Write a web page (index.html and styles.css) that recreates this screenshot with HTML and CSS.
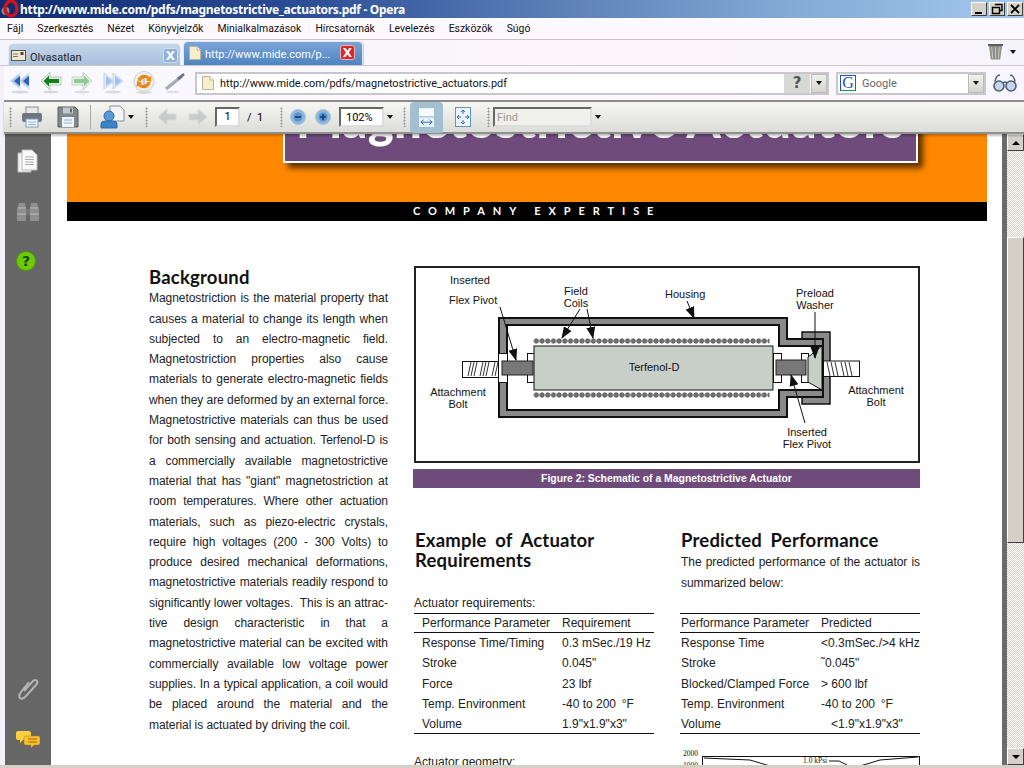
FILE: index.html
```html
<!DOCTYPE html>
<html lang="hu">
<head>
<meta charset="utf-8">
<title>Opera</title>
<link rel="stylesheet" href="styles.css">
</head>
<body>
<div class="window">
  <header class="titlebar">
    <svg class="ic-opera" width="18" height="18" viewBox="0 0 18 18"><circle cx="4.500" cy="11" r="4" fill="#8a8a98"/><ellipse cx="10" cy="8.500" rx="6" ry="7.500" fill="none" stroke="#c8161c" stroke-width="3.400"/></svg>
    <span class="title-text">http://www.mide.com/pdfs/magnetostrictive_actuators.pdf - Opera</span>
    <div class="winbtns">
      <span class="winbtn"><svg width="16" height="14" viewBox="0 0 16 14"><rect x="4" y="10" width="7" height="2" fill="#000"/></svg></span>
      <span class="winbtn"><svg width="16" height="14" viewBox="0 0 16 14"><path d="M6 2.500h7v6h-2M3.500 5.500h7v6h-7z" fill="none" stroke="#000" stroke-width="1.400"/></svg></span>
      <span class="winbtn"><svg width="16" height="14" viewBox="0 0 16 14"><path d="M4 3l8 8M12 3l-8 8" stroke="#000" stroke-width="1.800"/></svg></span>
    </div>
  </header>
  <nav class="menubar">
    <span>Fájl</span><span>Szerkesztés</span><span>Nézet</span><span>Könyvjelzők</span><span>Minialkalmazások</span><span>Hírcsatornák</span><span>Levelezés</span><span>Eszközök</span><span>Súgó</span>
  </nav>
  <div class="tabbar">
    <div class="tab tab-off">
      <svg width="15" height="11" viewBox="0 0 15 11"><rect x=".5" y=".5" width="14" height="10" fill="#f0e8c8" stroke="#555"/><rect x="9.500" y="2" width="3" height="3" fill="#444"/><path d="M2 4h5M2 6.500h5" stroke="#777"/></svg>
      <span class="tab-label">Olvasatlan</span>
      <span class="tab-x tab-x-off">X</span>
    </div>
    <div class="tab tab-on">
      <svg width="12" height="14" viewBox="0 0 12 14"><path d="M.5.5h7.500l3.500 3.500v9.500h-11z" fill="#f7eecd" stroke="#b9b39a"/><path d="M8 .5v3.500h3.500" fill="#fff" stroke="#b9b39a"/></svg>
      <span class="tab-label">http://www.mide.com/p...</span>
      <span class="tab-x tab-x-on">X</span>
    </div>
    <svg class="ic-trash" width="15" height="18" viewBox="0 0 16 18"><path d="M1 2h14l-2 15h-10z" fill="#8f8f8a"/><path d="M0 1.500h16" stroke="#555" stroke-width="2"/><path d="M4 4l1 12M8 4v12M12 4l-1 12" stroke="#c9c9c4"/></svg>
    <span class="caret caret-trash"></span>
  </div>
  <div class="addressbar">
    <svg class="tb-ic" width="22" height="24" viewBox="0 0 22 24"><ellipse cx="11" cy="21" rx="9" ry="1.500" fill="#d8d8dc"/><path d="M11 2v16L1 10zM20 2v16L10 10z" fill="#a9c8ee" stroke="#dfe6f0" stroke-width="1.200"/><path d="M11 5v10l-6-5zM20 5v10l-6-5z" fill="#2a62b4"/></svg>
    <svg class="tb-ic" width="22" height="24" viewBox="0 0 22 24"><ellipse cx="11" cy="21" rx="8" ry="1.500" fill="#d8d8dc"/><path d="M10 1v5h11v8H10v5L1 10z" fill="#e6ece6" stroke="#b9c6b9"/><path d="M9 4.500v3.500h10v4H9v3.500L3.500 10z" fill="#13801a"/></svg>
    <svg class="tb-ic" width="22" height="24" viewBox="0 0 22 24"><ellipse cx="11" cy="21" rx="8" ry="1.500" fill="#dcdce0"/><path d="M12 1v5H1v8h11v5l9-9z" fill="#eaf0ea" stroke="#c6d2c6"/><path d="M13 4.500v3.500H3v4h10v3.500l5.500-5.500z" fill="#93c993"/></svg>
    <svg class="tb-ic" width="22" height="24" viewBox="0 0 22 24"><ellipse cx="11" cy="21" rx="8" ry="1.500" fill="#dcdce0"/><path d="M2 2v16l10-8zM11 2v16l10-8z" fill="#e2ecf8" stroke="#c4d2e4"/><path d="M4 5v10l6.500-5zM13 5v10l6.500-5z" fill="#9fc2ee"/></svg>
    <svg class="tb-ic" width="22" height="24" viewBox="0 0 22 24"><ellipse cx="11" cy="21.500" rx="8" ry="1.500" fill="#d8d8dc"/><circle cx="11" cy="10.500" r="10" fill="#efeff0" stroke="#cfcfd2"/><path d="M4.500 9.500a7 7 0 0 1 12-3.500l2-1-.5 6-5.500-2 2-1a4.500 4.500 0 0 0-7 2.500z" fill="#f08a10"/><path d="M17.500 11.500a7 7 0 0 1-12 3.500l-2 1 .5-6 5.500 2-2 1a4.500 4.500 0 0 0 7-2.500z" fill="#f08a10"/><path d="M11 4v13" stroke="#888" stroke-width=".8"/></svg>
    <svg class="tb-ic" width="22" height="24" viewBox="0 0 22 24"><ellipse cx="9" cy="21" rx="7" ry="1.300" fill="#e0e0e4"/><path d="M2 18L18 5" stroke="#a4acb6" stroke-width="3.500"/><path d="M14 8l6-5" stroke="#66707e" stroke-width="2.500"/></svg>
    <div class="urlbox">
      <svg width="12" height="14" viewBox="0 0 12 14"><path d="M.5.5h7.500l3.500 3.500v9.500h-11z" fill="#f7eecd" stroke="#b9b39a"/><path d="M8 .5v3.500h3.500" fill="#fff" stroke="#b9b39a"/></svg>
      <span class="urltext">http://www.mide.com/pdfs/magnetostrictive_actuators.pdf</span>
      <span class="qbtn">?</span>
      <span class="ddbtn"><span class="caret"></span></span>
    </div>
    <div class="searchbox">
      <span class="gicon">G</span>
      <span class="gtext">Google</span>
      <span class="ddbtn"><span class="caret"></span></span>
    </div>
    <svg class="ic-glasses" width="24" height="20" viewBox="0 0 24 20"><circle cx="6" cy="13" r="5" fill="#c6d4f0" stroke="#4c5f70" stroke-width="1.600"/><circle cx="18" cy="13" r="5" fill="#c6d4f0" stroke="#4c5f70" stroke-width="1.600"/><path d="M10 10q2-2 4 0M2 9q1-7 5-7M22 9q-1-7-5-7" fill="none" stroke="#4c5f70" stroke-width="1.300"/></svg>
  </div>
  <div class="pdfbar">
    <span class="grip"></span>
    <svg class="pb-print" width="22" height="22" viewBox="0 0 22 22"><rect x="5" y="1" width="12" height="8" fill="#e8e8e8" stroke="#8a9096"/><rect x="1" y="7" width="20" height="9" rx="2" fill="#6f7880"/><rect x="5" y="13" width="12" height="8" fill="#f2f6fa" stroke="#7fa0bc"/><path d="M7 16h8M7 18.500h8" stroke="#9ab4cc"/></svg>
    <svg class="pb-save" width="22" height="22" viewBox="0 0 22 22"><path d="M1 1h17l3 3v17H1z" fill="#82878c" stroke="#5f5f5f"/><rect x="6" y="1.500" width="10" height="6" fill="#c4c8cc"/><rect x="13" y="2.500" width="2" height="4" fill="#666"/><rect x="5" y="11" width="12" height="10" fill="#eef3f8"/><path d="M7 14h8M7 17h8" stroke="#9ab4cc"/></svg>
    <span class="sep"></span>
    <svg class="pb-user" width="25" height="24" viewBox="0 0 25 24"><path d="M10 1h10l4 4v11H10z" fill="#f4f4f4" stroke="#8a9096"/><circle cx="9" cy="11" r="5" fill="#5a9ad6" stroke="#2a6aa6"/><path d="M1 23v-4q0-3 4-3h8q4 0 4 3v4z" fill="#3a82c8" stroke="#2a6aa6"/></svg>
    <span class="caret caret-user"></span>
    <span class="grip grip-nav"></span>
    <svg class="pb-arrow" width="20" height="18" viewBox="0 0 20 18"><path d="M10 1v5h9v6h-9v5L1 9z" fill="#c9cbc8" stroke="#dadbd8"/></svg>
    <svg class="pb-arrow2" width="20" height="18" viewBox="0 0 20 18"><path d="M10 1v5H1v6h9v5l9-8z" fill="#c9cbc8" stroke="#dadbd8"/></svg>
    <span class="pagebox">1</span>
    <span class="pagecount">/ &nbsp;1</span>
    <span class="grip grip-zoom"></span>
    <svg class="pb-zoom" width="16" height="16" viewBox="0 0 16 16"><circle cx="8" cy="8" r="7.500" fill="#8fb8de" stroke="#a9c4dc"/><circle cx="8" cy="8" r="4.500" fill="#5f93cb"/><path d="M5 8h6" stroke="#1d4d86" stroke-width="2"/></svg>
    <svg class="pb-zoom2" width="16" height="16" viewBox="0 0 16 16"><circle cx="8" cy="8" r="7.500" fill="#8fb8de" stroke="#a9c4dc"/><circle cx="8" cy="8" r="4.500" fill="#5f93cb"/><path d="M5 8h6M8 5v6" stroke="#1d4d86" stroke-width="2"/></svg>
    <span class="zoombox">102%</span>
    <span class="caret caret-zoom"></span>
    <span class="grip grip-fit"></span>
    <span class="fitbtn"><svg width="15" height="19" viewBox="0 0 16 20"><rect x="0" y="0" width="16" height="20" fill="#f6fafd"/><rect x="0" y="9" width="16" height="1" fill="#5f93c4"/><rect x="0" y="10" width="16" height="10" fill="#e9f1f8"/><path d="M2 15h12M2 15l3-2.500M2 15l3 2.500M14 15l-3-2.500M14 15l-3 2.500" stroke="#2a6fb0" fill="none"/></svg></span>
    <svg class="pb-fitpage" width="16" height="20" viewBox="0 0 16 20"><rect x=".5" y=".5" width="15" height="19" fill="#eef5fb" stroke="#5f93c4"/><path d="M8 3v4M6 5l2-2 2 2M8 17v-4M6 15l2 2 2-2M2 10h4M4 8l-2 2 2 2M14 10h-4M12 8l2 2-2 2" fill="none" stroke="#2a6fb0"/></svg>
    <span class="grip grip-find"></span>
    <span class="findbox">Find</span>
    <span class="caret caret-find"></span>
  </div>
  <main class="workspace">
    <aside class="sidebar">
      <svg width="22" height="24" viewBox="0 0 22 24"><path d="M1 4h13v19H1z" fill="#f4f4f4" stroke="#bbb"/><path d="M5 1h10l5 5v15H5z" fill="#fafafa" stroke="#bbb"/><path d="M8 8h9M8 10.500h9M8 13h9M8 15.500h9" stroke="#aaa"/></svg>
      <svg class="sb-bino" width="24" height="20" viewBox="0 0 24 20"><path d="M1 7l2-6h6l1 6v12H1zM14 7l1-6h6l2 6v12h-9z" fill="#8f8f8f"/><path d="M2 6h8M14 6h8M1 12h9M14 12h9" stroke="#bcbcbc"/><rect x="10" y="7" width="4" height="6" fill="#777"/></svg>
      <svg class="sb-help" width="20" height="20" viewBox="0 0 20 20"><circle cx="10" cy="10" r="9.500" fill="#6fc808" stroke="#4d9a05"/><text x="10" y="15" text-anchor="middle" class="sb-help-q">?</text></svg>
      <span class="sb-spacer"></span>
      <svg class="sb-clip" width="22" height="24" viewBox="0 0 22 24"><path d="M7 14L16 4q3-2 4 0t-1 4L9 19q-4 4-6 2t1-6l8-10" fill="none" stroke="#b4b4b4" stroke-width="2"/></svg>
      <svg class="sb-comm" width="24" height="19" viewBox="0 0 24 19"><path d="M2 1h11q2 0 2 2v5q0 2-2 2H7l-3 3v-3H2q-2 0-2-2V3q0-2 2-2z" fill="#f8d040"/><path d="M10 6h12q2 0 2 2v5q0 2-2 2h-4l-3 3v-3h-5q-2 0-2-2V8q0-2 2-2z" fill="#fbc02a" stroke="#b07a10" stroke-width=".5"/><path d="M12 9h9M12 12h9" stroke="#9a6a10"/></svg>
    </aside>
    <article class="page">
      <div class="banner">
        <div class="titlebox"><div class="doc-title">Magnetostrictive Actuators</div></div>
      </div>
      <div class="blackbar">COMPANY EXPERTISE</div>
      <div class="content">
        <section class="col-left">
          <h2>Background</h2>
          <div class="just">
            <span>Magnetostriction is the material property that</span>
            <span>causes a material to change its length when</span>
            <span>subjected to an electro-magnetic field.</span>
            <span>Magnetostriction properties also cause</span>
            <span>materials to generate electro-magnetic fields</span>
            <span>when they are deformed by an external force.</span>
            <span>Magnetostrictive materials can thus be used</span>
            <span>for both sensing and actuation. Terfenol-D is</span>
            <span>a commercially available magnetostrictive</span>
            <span>material that has "giant" magnetostriction at</span>
            <span>room temperatures. Where other actuation</span>
            <span>materials, such as piezo-electric crystals,</span>
            <span>require high voltages (200 - 300 Volts) to</span>
            <span>produce desired mechanical deformations,</span>
            <span>magnetostrictive materials readily respond to</span>
            <span>significantly lower voltages.&nbsp; This is an attrac-</span>
            <span>tive design characteristic in that a</span>
            <span>magnetostrictive material can be excited with</span>
            <span>commercially available low voltage power</span>
            <span>supplies. In a typical application, a coil would</span>
            <span>be placed around the material and the</span>
            <span class="last">material is actuated by driving the coil.</span>
          </div>
        </section>
        <section class="col-right">
          <svg class="diagram" width="506" height="197" viewBox="414 266 506 197">
            <defs>
              <pattern id="coil" x="533.500" y="338" width="5.700" height="6" patternUnits="userSpaceOnUse"><circle cx="2.850" cy="3" r="2.200" fill="#777" stroke="#333" stroke-width=".7"/></pattern>
              <marker id="ah" viewBox="0 0 12 10" refX="11" refY="5" markerUnits="userSpaceOnUse" markerWidth="12" markerHeight="10" orient="auto"><path d="M0 .5L12 5 0 9.500z" fill="#111"/></marker>
            </defs>
            <rect x="415" y="267" width="504" height="195" fill="#fff" stroke="#222" stroke-width="2"/>
            <rect x="802" y="332" width="28" height="72" fill="#8a8a8a" stroke="#111" stroke-width="1.500"/>
            <path d="M499 318H787V339H823V397H787V417H499z" fill="#8a8a8a" stroke="#111" stroke-width="2"/>
            <path d="M507 325H779V346H822V390H779V410H507z" fill="#fff" stroke="#111" stroke-width="2"/>
            <rect x="533.500" y="338" width="236" height="6" fill="url(#coil)"/>
            <rect x="533.500" y="392" width="236" height="6" fill="url(#coil)"/>
            <rect x="462.500" y="361.500" width="36" height="16" fill="#fff" stroke="#111"/>
            <path d="M468 376l3-14M471 376l3-14M474 376l3-14M480 376l3-14M483 376l3-14M486 376l3-14M492 376l3-14M495 376l3-14" stroke="#333"/>
            <rect x="498.500" y="353.500" width="9" height="29" fill="#fff" stroke="#111"/>
            <rect x="527.500" y="353.500" width="7" height="29" fill="#fff" stroke="#111"/>
            <rect x="502" y="361" width="31" height="14" fill="#777" stroke="#222"/>
            <rect x="534" y="346" width="239" height="44" fill="#c8cfc8" stroke="#111"/>
            <rect x="773.500" y="353.500" width="8" height="29" fill="#fff" stroke="#111"/>
            <rect x="801.500" y="353.500" width="7" height="29" fill="#fff" stroke="#111"/>
            <rect x="776" y="360" width="30" height="15" fill="#777" stroke="#222"/>
            <path d="M808 357L822 346V390L808 382z" fill="#c8cfc8" stroke="#111"/>
            <rect x="823.500" y="361" width="36" height="15.500" fill="#fff" stroke="#111"/>
            <path d="M827 362l3 14M831 362l3 14M835 362l3 14M841 362l3 14M845 362l3 14M849 362l3 14" stroke="#333"/>
            <g stroke="#111" marker-end="url(#ah)">
              <path d="M500 307L516 360"/>
              <path d="M580 309L562 338"/>
              <path d="M587 309L593 338"/>
              <path d="M687 301L694 318"/>
              <path d="M815 312V358"/>
              <path d="M805 423L791 375"/>
            </g>
            <g class="dg-text">
              <text x="450" y="284">Inserted</text>
              <text x="449" y="304">Flex Pivot</text>
              <text x="576" y="295" class="mid">Field</text>
              <text x="576" y="307" class="mid">Coils</text>
              <text x="665" y="298">Housing</text>
              <text x="815" y="297" class="mid">Preload</text>
              <text x="815" y="309" class="mid">Washer</text>
              <text x="654" y="371" class="mid">Terfenol-D</text>
              <text x="458" y="396" class="mid">Attachment</text>
              <text x="458" y="408" class="mid">Bolt</text>
              <text x="876" y="394" class="mid">Attachment</text>
              <text x="876" y="406" class="mid">Bolt</text>
              <text x="807" y="436" class="mid">Inserted</text>
              <text x="807" y="448" class="mid">Flex Pivot</text>
            </g>
          </svg>
          <div class="caption">Figure 2: Schematic of a Magnetostrictive Actuator</div>
          <div class="two-col">
            <div>
              <h2>Example of Actuator<br>Requirements</h2>
              <div class="lead">Actuator requirements:</div>
              <table class="spec spec-l">
                <thead><tr><th>Performance Parameter</th><th>Requirement</th></tr></thead>
                <tbody>
                  <tr><td>Response Time/Timing</td><td>0.3 mSec./19 Hz</td></tr>
                  <tr><td>Stroke</td><td>0.045"</td></tr>
                  <tr><td>Force</td><td>23 lbf</td></tr>
                  <tr><td>Temp. Environment</td><td>-40 to 200 &thinsp;°F</td></tr>
                  <tr><td>Volume</td><td>1.9"x1.9"x3"</td></tr>
                </tbody>
              </table>
              <div class="lead lead-geo">Actuator geometry:</div>
            </div>
            <div>
              <h2>Predicted Performance</h2>
              <div class="just intro">
                <span>The predicted performance of the actuator is</span>
                <span class="last">summarized below:</span>
              </div>
              <table class="spec spec-r">
                <thead><tr><th>Performance Parameter</th><th>Predicted</th></tr></thead>
                <tbody>
                  <tr><td>Response Time</td><td>&lt;0.3mSec./&gt;4 kHz</td></tr>
                  <tr><td>Stroke</td><td>˜0.045"</td></tr>
                  <tr><td>Blocked/Clamped Force</td><td>&gt; 600 lbf</td></tr>
                  <tr><td>Temp. Environment</td><td>-40 to 200 &thinsp;°F</td></tr>
                  <tr><td>Volume</td><td>&nbsp; &nbsp;&lt;1.9"x1.9"x3"</td></tr>
                </tbody>
              </table>
              <svg class="chart" width="240" height="20" viewBox="680 750 240 20">
                <text x="683" y="756" class="chart-t">2000</text>
                <text x="683" y="768" class="chart-t">1000</text>
                <rect x="702.500" y="756.500" width="217" height="20" fill="#fff" stroke="#111"/>
                <path d="M704 758L750 760 770 766M860 766L880 760 918 757" fill="none" stroke="#111"/>
                <text x="803" y="763" class="chart-t">1.0 kPsi</text>
                <path d="M829 761h10l8 4" fill="none" stroke="#111"/>
              </svg>
            </div>
          </div>
        </section>
      </div>
    </article>
    <div class="rail"></div>
    <div class="scrollbar">
      <span class="sb-btn"><span class="sb-up"></span></span>
      <span class="sb-track-a"></span>
      <span class="sb-thumb"></span>
      <span class="sb-track-b"></span>
      <span class="sb-btn"><span class="sb-down"></span></span>
    </div>
  </main>
  <div class="statusstrip"></div>
</div>
</body>
</html>
```
FILE: styles.css
```css
* { box-sizing: border-box; }
html, body { margin: 0; padding: 0; }
body { width: 1024px; height: 768px; overflow: hidden; background: #f4f0fa; font-family: "Liberation Sans", Arial, sans-serif; }
.window { width: 1024px; height: 768px; display: flex; flex-direction: column; }

.titlebar { height: 18px; display: flex; align-items: center; background: linear-gradient(90deg, #0f2a70 0%, #2c4e96 30%, #5e80b8 55%, #80a6d2 75%, #a4c8f0 100%); }
.ic-opera { flex: none; margin-left: 1px; }
.title-text { margin-left: 1px; color: #fff; font: bold 12px "Noto Sans", sans-serif; white-space: nowrap; letter-spacing: -.29px; }
.winbtns { margin-left: auto; display: flex; gap: 2px; margin-right: 1px; }
.winbtn { width: 16px; height: 14px; background: #d4d0c8; border: 1px solid; border-color: #fff #404040 #404040 #fff; display: flex; align-items: center; justify-content: center; }
.winbtn svg { margin: -1px; flex: none; }

.menubar { height: 22px; display: flex; align-items: center; gap: 14px; padding-left: 7px; font: 10.450px Roboto, sans-serif; color: #111; background: linear-gradient(180deg, #fafaff, #fff7fb); border-bottom: 1px solid #c4c4cc; }

.tabbar { height: 26px; display: flex; align-items: flex-end; padding-left: 8px; background: linear-gradient(90deg, #f4f4fc, #fdf6fb 60%, #f6f4fb); border-bottom: 1px solid #c9c9d0; }
.tab { display: flex; align-items: center; border-radius: 5px 5px 0 0; }
.tab-off { width: 173px; height: 22px; padding: 2px 2px 0 2px; background: linear-gradient(180deg, #c5d6ea, #a8c0dc); border: 1px solid #e8eef6; border-bottom: 0; color: #222; }
.tab-on { width: 180px; height: 24px; margin-left: 2px; padding: 0 7px 2px 5px; background: linear-gradient(180deg, #7aa4d6, #4f84c2); border: 1px solid #dfe8f2; border-bottom: 0; color: #fff; box-shadow: 1px 0 0 #c8ccd4; }
.tab-label { margin: 3px 0 0 4px; font: 11px Roboto, sans-serif; white-space: nowrap; }
.tab-x { margin-left: auto; width: 15px; height: 15px; border-radius: 3px; display: flex; align-items: center; justify-content: center; color: #fff; font: bold 12px "DejaVu Sans", sans-serif; }
.tab-x-off { background: #8fb0d6; border: 1px solid #cfe0f0; }
.tab-x-on { background: #d42a2a; border: 1px solid #f0b0b0; }
.ic-trash { margin-left: auto; margin-right: 7px; margin-bottom: 4px; }
.caret { display: inline-block; width: 0; height: 0; border: 3px solid transparent; border-top: 4px solid #111; border-bottom: 0; flex: none; }
.caret-trash { margin-right: 8px; margin-bottom: 11px; }

.addressbar { height: 34px; margin-left: 4px; display: flex; align-items: center; padding-left: 5px; background: linear-gradient(90deg, #f8f8ff, #fff7fb 70%, #f8f6fc); }
.tb-ic { flex: none; margin-right: 9px; }
.urlbox { width: 634px; height: 23px; margin-left: 0; background: #fff; border: 2px solid #c8c8cc; display: flex; align-items: center; padding-left: 5px; flex: none; }
.urltext { margin: 1px 0 0 6px; font: 10.900px Roboto, sans-serif; color: #111; white-space: nowrap; }
.qbtn { margin-left: auto; width: 26px; height: 19px; display: flex; align-items: center; justify-content: center; background: #d8d8d4; color: #555; font: bold 15px "DejaVu Sans", sans-serif; }
.ddbtn { width: 16px; height: 19px; margin-left: 1px; display: flex; align-items: center; justify-content: center; background: linear-gradient(180deg, #f0f0ee, #d4d4d0); border: 1px solid #bbb; }
.searchbox { width: 150px; height: 23px; margin-left: 7px; background: #fff; border: 2px solid #c8c8cc; display: flex; align-items: center; padding-left: 2px; flex: none; }
.gicon { width: 16px; height: 16px; border: 1px solid; border-color: #1d4dc8 #d02020 #1a9a2a #1d4dc8; color: #1d4dc8; font: 16px/14px "Liberation Serif", serif; text-align: center; }
.gtext { margin: 1px 0 0 6px; font: 11px Roboto, sans-serif; color: #666; }
.searchbox .ddbtn { margin-left: auto; }
.ic-glasses { margin-left: 7px; flex: none; }

.pdfbar { height: 34px; margin-left: 4px; display: flex; align-items: center; background: linear-gradient(180deg, #f6f6f2, #dcdcd8); border-top: 2px solid #8c8c8c; border-bottom: 2px solid #8f8f8f; padding-left: 5px; position: relative; z-index: 2; box-shadow: 0 2px 2px rgba(0,0,0,.25); }
.grip { width: 3px; height: 20px; flex: none; background-image: radial-gradient(circle, #999 45%, transparent 50%); background-size: 3px 3px; }
.pb-print { margin-left: 9px; flex: none; }
.pb-save { margin-left: 14px; flex: none; }
.sep { width: 1px; height: 24px; margin-left: 11px; background: #aaa; flex: none; }
.pb-user { margin-left: 9px; flex: none; }
.caret-user { margin-left: 3px; }
.grip-nav { margin-left: 11px; }
.pb-arrow { margin-left: 9px; flex: none; }
.pb-arrow2 { margin-left: 11px; flex: none; }
.pagebox { width: 25px; height: 20px; margin-left: 7px; background: #fff; border: 2px solid; border-color: #666 #ddd #ddd #666; font: 11px/16px Roboto, sans-serif; text-align: center; flex: none; }
.pagecount { width: 33px; margin-left: 7px; font: 11px Roboto, sans-serif; white-space: nowrap; flex: none; }
.grip-zoom { margin-left: 0; }
.pb-zoom { margin-left: 7px; flex: none; }
.pb-zoom2 { margin-left: 9px; flex: none; }
.zoombox { width: 45px; height: 20px; margin-left: 8px; background: #fff; border: 2px solid; border-color: #666 #ddd #ddd #666; font: 11px/17px Roboto, sans-serif; padding-left: 5px; flex: none; }
.caret-zoom { margin-left: 3px; }
.grip-fit { margin-left: 10px; }
.fitbtn { width: 33px; height: 31px; margin-left: 4px; background: #a3c0d0; border-radius: 4px; display: flex; align-items: center; justify-content: center; flex: none; }
.pb-fitpage { margin-left: 12px; flex: none; }
.grip-find { margin-left: 16px; }
.findbox { width: 99px; height: 20px; margin-left: 3px; background: #f0f0ec; border: 2px solid; border-color: #666 #ddd #ddd #666; padding-left: 2px; font: 11px/17px Roboto, sans-serif; color: #999; flex: none; }
.caret-find { margin-left: 3px; }

.workspace { flex: 1; min-height: 0; margin-left: 5px; display: flex; overflow: hidden; background: #fff; }
.sidebar { width: 46px; flex: none; background: #666; display: flex; flex-direction: column; align-items: center; padding: 15px 0 16px; }
.sb-bino { margin-top: 29px; }
.sb-help { margin-top: 29px; margin-right: 4px; }
.sb-help-q { font: bold 14px "DejaVu Sans", sans-serif; fill: #0c4a08; }
.sb-spacer { flex: 1; }
.sb-comm { margin-top: 29px; margin-right: 1px; }

.page { width: 951px; flex: none; padding-left: 16px; background: #fff; }
.banner { width: 920px; height: 68px; background: #ff8800; display: flex; align-items: flex-end; overflow: hidden; padding: 0 0 39px 216px; }
.titlebox { width: 635px; height: 62px; flex: none; background: #6f4b7c; border: 2px solid #fff; border-top: 0; box-shadow: 5px 5px 6px rgba(0,0,0,.65); padding-left: 11px; }
.doc-title { margin-top: -4px; font: 900 49px/44px Lato, sans-serif; letter-spacing: .3px; color: #fff; white-space: nowrap; }
.blackbar { width: 920px; height: 19px; background: #000; color: #fff; font: bold 11px/18px Lato, sans-serif; letter-spacing: 7.900px; padding-left: 346px; white-space: nowrap; }
.content { display: grid; grid-template-columns: 239px 506px; column-gap: 26px; padding: 45px 0 0 82px; }
h2 { margin: 0; font: 700 18.500px/20.300px Lato, sans-serif; letter-spacing: .2px; word-spacing: 4px; color: #111; }
.col-left h2 { margin: 1px 0 1px; }
.just { font-size: 12px; line-height: 20.300px; letter-spacing: -.05px; color: #222; }
.just span { display: block; white-space: nowrap; text-align: justify; text-align-last: justify; }
.just span.last { text-align-last: left; }
.diagram { display: block; }
.dg-text text { font: 11px "Liberation Sans", sans-serif; fill: #111; }
.dg-text .mid { text-anchor: middle; }
.caption { width: 507px; height: 19px; margin: 6px 0 0 -1px; background: #6f4b7c; color: #fff; font: bold 10.400px/19px "Liberation Sans", sans-serif; text-align: center; }
.two-col { display: grid; grid-template-columns: 240px 240px; column-gap: 26px; margin-top: 42px; }
.two-col h2 { padding-left: 1px; }
.intro { padding: 2px 0 0 1px; }
.lead { margin-top: 22.300px; font-size: 12px; line-height: 20px; color: #222; }
.lead-geo { margin-top: 18px; }
.intro + .spec { margin-top: 20px; }
.spec { width: 240px; border-collapse: collapse; font-size: 12px; color: #222; border-bottom: 1px solid #111; table-layout: fixed; }
.spec th { font-weight: normal; text-align: left; height: 19px; padding: 0; border-top: 1px solid #111; border-bottom: 1px solid #111; white-space: nowrap; }
.spec td { height: 20.300px; padding: 1px 0 0; white-space: nowrap; }
.spec-l th:first-child, .spec-l td:first-child { width: 148px; padding-left: 8px; }
.spec-r th:first-child, .spec-r td:first-child { width: 141px; padding-left: 1px; }
.chart { display: block; margin-top: 16px; overflow: visible; }
.chart-t { font: 7.500px "Liberation Serif", serif; fill: #111; }

.rail { width: 5px; flex: none; background: #6c6c6c; }
.scrollbar { width: 17px; flex: none; display: flex; flex-direction: column; background: #d4d0c8; }
.sb-btn { height: 17px; flex: none; background: #d4d0c8; border: 1px solid; border-color: #fff #404040 #404040 #fff; display: flex; align-items: center; justify-content: center; }
.sb-up { width: 0; height: 0; border: 4px solid transparent; border-bottom: 4px solid #000; border-top: 0; }
.sb-down { width: 0; height: 0; border: 4px solid transparent; border-top: 4px solid #000; border-bottom: 0; }
.sb-track-a, .sb-track-b { background-color: #fff; background-image: repeating-conic-gradient(#d4d0c8 0 25%, #fff 0 50%); background-size: 2px 2px; }
.sb-track-a { height: 86px; flex: none; }
.sb-track-b { flex: 1; }
.sb-thumb { height: 306px; flex: none; background: #d4d0c8; border: 1px solid; border-color: #fff #404040 #404040 #fff; }
.statusstrip { height: 3px; background: #d4d0c8; flex: none; }
```
